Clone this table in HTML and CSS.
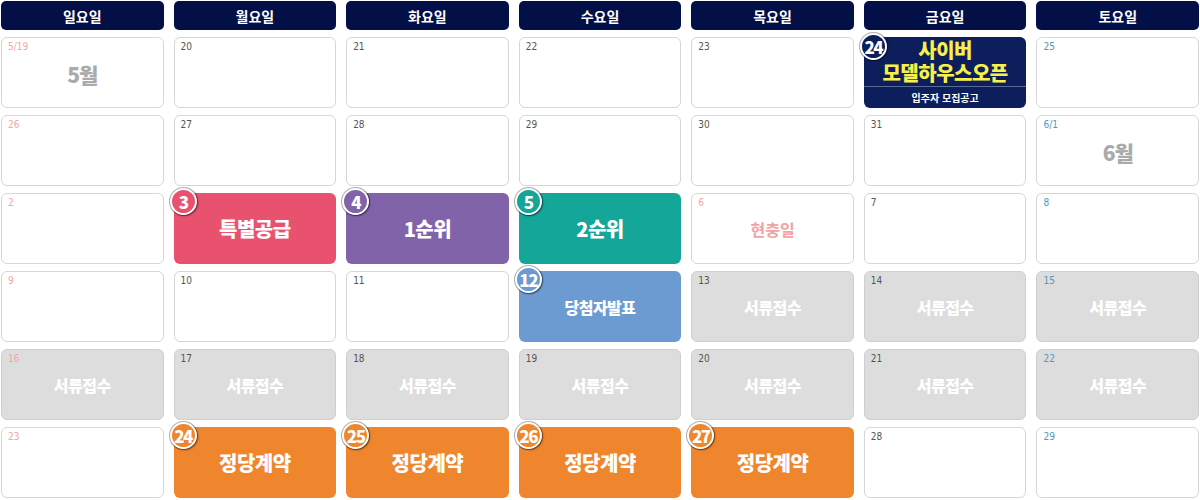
FILE: index.html
```html
<!DOCTYPE html>
<html lang="ko">
<head>
<meta charset="utf-8">
<link rel="stylesheet" href="styles.css">
</head>
<body>
<div class="calendar">
  <div class="day-name">일요일</div>
  <div class="day-name">월요일</div>
  <div class="day-name">화요일</div>
  <div class="day-name">수요일</div>
  <div class="day-name">목요일</div>
  <div class="day-name">금요일</div>
  <div class="day-name">토요일</div>

  <!-- week 1 -->
  <div class="cell sun"><span class="num">5/19</span><p class="month">5월</p></div>
  <div class="cell"><span class="num">20</span></div>
  <div class="cell"><span class="num">21</span></div>
  <div class="cell"><span class="num">22</span></div>
  <div class="cell"><span class="num">23</span></div>
  <div class="cell open">
    <span class="badge">24</span>
    <div class="open-title">
      <span>사이버</span>
      <span>모델하우스오픈</span>
    </div>
    <div class="open-sub">입주자 모집공고</div>
  </div>
  <div class="cell sat"><span class="num">25</span></div>

  <!-- week 2 -->
  <div class="cell sun"><span class="num">26</span></div>
  <div class="cell"><span class="num">27</span></div>
  <div class="cell"><span class="num">28</span></div>
  <div class="cell"><span class="num">29</span></div>
  <div class="cell"><span class="num">30</span></div>
  <div class="cell"><span class="num">31</span></div>
  <div class="cell sat"><span class="num">6/1</span><p class="month">6월</p></div>

  <!-- week 3 -->
  <div class="cell sun"><span class="num">2</span></div>
  <div class="cell event pink"><span class="badge">3</span><p class="label">특별공급</p></div>
  <div class="cell event purple"><span class="badge">4</span><p class="label">1순위</p></div>
  <div class="cell event teal"><span class="badge">5</span><p class="label">2순위</p></div>
  <div class="cell sun"><span class="num">6</span><p class="holiday">현충일</p></div>
  <div class="cell"><span class="num">7</span></div>
  <div class="cell sat"><span class="num">8</span></div>

  <!-- week 4 -->
  <div class="cell sun"><span class="num">9</span></div>
  <div class="cell"><span class="num">10</span></div>
  <div class="cell"><span class="num">11</span></div>
  <div class="cell event blue"><span class="badge">12</span><p class="label small">당첨자발표</p></div>
  <div class="cell docs"><span class="num">13</span><p class="label small">서류접수</p></div>
  <div class="cell docs"><span class="num">14</span><p class="label small">서류접수</p></div>
  <div class="cell docs sat"><span class="num">15</span><p class="label small">서류접수</p></div>

  <!-- week 5 -->
  <div class="cell docs sun"><span class="num">16</span><p class="label small">서류접수</p></div>
  <div class="cell docs"><span class="num">17</span><p class="label small">서류접수</p></div>
  <div class="cell docs"><span class="num">18</span><p class="label small">서류접수</p></div>
  <div class="cell docs"><span class="num">19</span><p class="label small">서류접수</p></div>
  <div class="cell docs"><span class="num">20</span><p class="label small">서류접수</p></div>
  <div class="cell docs"><span class="num">21</span><p class="label small">서류접수</p></div>
  <div class="cell docs sat"><span class="num">22</span><p class="label small">서류접수</p></div>

  <!-- week 6 -->
  <div class="cell sun"><span class="num">23</span></div>
  <div class="cell event orange"><span class="badge">24</span><p class="label">정당계약</p></div>
  <div class="cell event orange"><span class="badge">25</span><p class="label">정당계약</p></div>
  <div class="cell event orange"><span class="badge">26</span><p class="label">정당계약</p></div>
  <div class="cell event orange"><span class="badge">27</span><p class="label">정당계약</p></div>
  <div class="cell"><span class="num">28</span></div>
  <div class="cell sat"><span class="num">29</span></div>
</div>
</body>
</html>
```

FILE: styles.css
```css
html, body {
  margin: 0;
  padding: 0;
  background: #fff;
  font-family: "Noto Sans CJK KR", "Noto Sans", sans-serif;
}
.calendar {
  display: grid;
  grid-template-columns: repeat(7, 1fr);
  grid-template-rows: 29px repeat(6, 71px);
  column-gap: 10px;
  row-gap: 7px;
  padding: 1px 1px 0 1px;
}
.day-name {
  background: #030f47;
  color: #fff;
  border-radius: 5px;
  font-weight: 700;
  font-size: 14px;
  display: flex;
  align-items: center;
  justify-content: center;
}
.cell {
  position: relative;
  border: 1.5px solid #d6d6d6;
  border-radius: 6px;
  background: #fff;
  display: flex;
  align-items: center;
  justify-content: center;
}
.num {
  position: absolute;
  top: 3px;
  left: 6px;
  font-family: "DejaVu Sans Condensed", Roboto, sans-serif;
  font-size: 10px;
  color: #555;
}
.sun .num { color: #f5a5a5; }
.sat .num { color: #4d9ac4; }
p {
  margin: 0;
}
.month {
  font-size: 21px;
  font-weight: 900;
  color: #aaa;
  letter-spacing: -1px;
  margin-top: 2px;
}
.holiday {
  font-size: 16px;
  font-weight: 700;
  color: #f3a1a1;
}
.label {
  color: #fff;
  font-weight: 900;
  font-size: 20px;
  letter-spacing: -0.5px;
}
.label.small {
  font-size: 16px;
}
.event {
  border: none;
}
.pink { background: #e9526f; }
.purple { background: #8163a9; }
.teal { background: #14a699; }
.blue { background: #6c9bd2; }
.orange { background: #ef852c; }
.docs {
  background: #dddddd;
  border-color: #cfcfcf;
}
.badge {
  position: absolute;
  top: -5px;
  left: -4px;
  width: 23px;
  height: 23px;
  border-radius: 50%;
  border: 2px solid #fff;
  box-shadow: 0 0 0 1px rgba(0, 0, 0, 0.3), 1px 1px 2px rgba(0, 0, 0, 0.4);
  background: inherit;
  color: #fff;
  font-weight: 900;
  font-size: 17px;
  letter-spacing: -1.5px;
  display: flex;
  align-items: center;
  justify-content: center;
  line-height: 1;
}
.open {
  background: #0c1f5c;
  border: none;
  flex-direction: column;
  justify-content: flex-start;
}
.open .badge {
  top: -4px;
  left: -4px;
  background: #0c1f5c;
}
.open-title {
  display: flex;
  flex-direction: column;
  align-items: center;
  color: #f8ef4a;
  font-weight: 900;
  font-size: 20px;
  line-height: 23px;
  padding-top: 1px;
  letter-spacing: -0.5px;
}
.open-sub {
  margin-top: 2px;
  width: 100%;
  border-top: 1px solid #5a6a94;
  color: #fff;
  font-weight: 700;
  font-size: 10px;
  text-align: center;
  padding-top: 3px;
}
```
